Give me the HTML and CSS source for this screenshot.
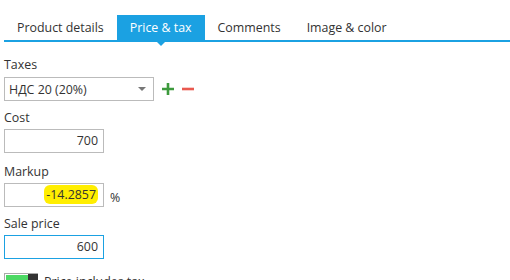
FILE: index.html
```html
<!DOCTYPE html>
<html lang="en">
<head>
    <meta charset="UTF-8">
    <title>Price &amp; tax</title>
    <link rel="stylesheet" href="styles.css">
</head>
<body>
    <div class="tabs">
        <div class="tab">Product details</div>
        <div class="tab active">Price &amp; tax</div>
        <div class="tab">Comments</div>
        <div class="tab">Image &amp; color</div>
    </div>

    <div class="form">
        <div class="form-group taxes">
            <label>Taxes</label>
            <div class="row">
                <div class="select">
                    <span>НДС 20 (20%)</span>
                    <span class="arrow"></span>
                </div>
                <svg class="icon" width="12" height="12" viewBox="0 0 12 12">
                    <path d="M6 0V12M0 6H12" stroke="#3d9a3d" stroke-width="2.6"/>
                </svg>
                <svg class="icon" width="12" height="12" viewBox="0 0 12 12">
                    <path d="M0 6H12" stroke="#e9594f" stroke-width="2.6"/>
                </svg>
            </div>
        </div>

        <div class="form-group">
            <label>Cost</label>
            <div class="input">700</div>
        </div>

        <div class="form-group markup">
            <label>Markup</label>
            <div class="row">
                <div class="input"><span class="mark">-14.2857</span></div>
                <span class="unit">%</span>
            </div>
        </div>

        <div class="form-group">
            <label>Sale price</label>
            <div class="input focus">600</div>
        </div>

        <div class="toggle-row">
            <div class="toggle"><span class="fill"></span><span class="knob"></span></div>
            <span>Price includes tax</span>
        </div>
    </div>
</body>
</html>
```

FILE: styles.css
```css
body {
    margin: 0;
    padding: 15px 0 0 4px;
    font-family: "Open Sans", sans-serif;
    font-size: 12.4px;
    color: #333;
    background: #fff;
}
.tabs {
    display: flex;
    border-bottom: 2px solid #1ba1e2;
    height: 25px;
}
.tab {
    padding: 0 13px;
    line-height: 25px;
    position: relative;
}
.tab.active {
    background: #1ba1e2;
    color: #fff;
}
.tab.active::after {
    content: "";
    position: absolute;
    left: 50%;
    bottom: -6px;
    margin-left: -4px;
    border: 4px solid transparent;
    border-top-color: #1ba1e2;
    border-bottom: 0;
}
.form {
    padding-top: 14px;
}
.form-group {
    margin-bottom: 10px;
}
.form-group.taxes {
    margin-bottom: 8px;
}
.form-group.taxes .row {
    margin-top: 3px;
}
.form-group.markup {
    margin-bottom: 8px;
}
label {
    display: block;
    line-height: 18px;
    margin-bottom: 2px;
}
.row {
    display: flex;
    align-items: center;
}
.select {
    width: 150px;
    height: 24px;
    box-sizing: border-box;
    border: 1px solid #bbb;
    display: flex;
    align-items: center;
    justify-content: space-between;
    padding: 0 7px 0 4px;
}
.arrow {
    border: 3px solid transparent;
    border-top: 4px solid #777;
    border-bottom: 0;
    border-left-width: 4px;
    border-right-width: 4px;
}
.icon {
    margin-left: 8px;
}
.input {
    width: 100px;
    height: 24px;
    box-sizing: border-box;
    border: 1px solid #bbb;
    text-align: right;
    padding: 0 5px;
    line-height: 22px;
}
.input.focus {
    border-color: #1ba1e2;
}
.mark {
    background: #ffee00;
    border-radius: 6px;
    padding: 1px 2px;
}
.unit {
    margin-left: 6px;
    padding-top: 4px;
}
.toggle-row {
    display: flex;
    align-items: flex-start;
    gap: 6px;
    margin-top: 14px;
}
.toggle {
    display: flex;
    width: 34px;
    height: 14px;
    box-sizing: border-box;
    border: 1px solid #aaa;
    border-right: 0;
    border-bottom: 0;
}
.fill {
    flex: 1;
    margin: 1px 0 0 1px;
    background: #4cd964;
}
.knob {
    width: 10px;
    background: #333;
}
```
